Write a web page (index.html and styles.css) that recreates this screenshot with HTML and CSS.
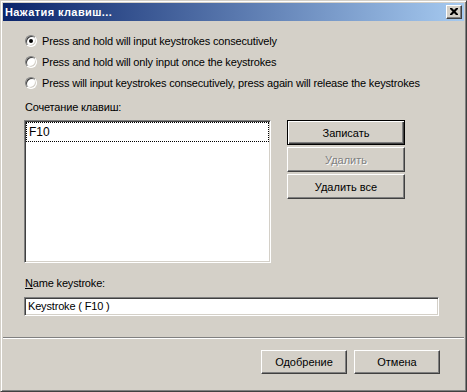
FILE: index.html
```html
<!DOCTYPE html>
<html lang="ru">
<head>
    <meta charset="UTF-8">
    <title>Нажатия клавиш...</title>
    <link rel="stylesheet" href="styles.css">
</head>
<body>
    <div class="window">
        <div class="titlebar">
            <span class="title">Нажатия клавиш...</span>
            <button class="close-btn">
                <svg width="8" height="7" viewBox="0 0 8 7">
                    <path d="M0 0h2l2 2 2-2h2v1l-2.5 2.5 2.5 2.5v1h-2l-2-2-2 2h-2v-1l2.5-2.5-2.5-2.5z" fill="#000"/>
                </svg>
            </button>
        </div>

        <div class="content">
            <div class="options">
                <label class="option"><span class="radio checked"></span>Press and hold will input keystrokes consecutively</label>
                <label class="option"><span class="radio"></span>Press and hold will only input once the keystrokes</label>
                <label class="option"><span class="radio"></span>Press will input keystrokes consecutively, press again will release the keystrokes</label>
            </div>

            <div class="caption">Сочетание клавиш:</div>
            <div class="keys-row">
                <div class="listbox">
                    <div class="list-item">F10</div>
                </div>
                <div class="side-buttons">
                    <button class="btn default">Записать</button>
                    <button class="btn disabled">Удалить</button>
                    <button class="btn">Удалить все</button>
                </div>
            </div>

            <div class="caption name-caption"><u>N</u>ame keystroke:</div>
            <div class="textbox">Keystroke ( F10 )</div>
        </div>

        <div class="separator"></div>

        <div class="footer">
            <button class="btn footer-btn">Одобрение</button>
            <button class="btn footer-btn">Отмена</button>
        </div>
    </div>
</body>
</html>
```

FILE: styles.css
```css
* {
    margin: 0;
    padding: 0;
    box-sizing: border-box;
}

body {
    background-color: #d4d0c8;
    font-family: "Liberation Sans", Arial, sans-serif;
    font-size: 11px;
    color: #000;
}

.window {
    width: 467px;
    height: 392px;
    background-color: #d4d0c8;
    border: 1px solid;
    border-color: #d4d0c8 #404040 #404040 #d4d0c8;
    box-shadow: inset 1px 1px #fff, inset -1px -1px #808080;
    padding: 2px;
    display: flex;
    flex-direction: column;
}

/* Title bar */
.titlebar {
    height: 18px;
    background: linear-gradient(to right, #0a246a, #a6caf0);
    display: flex;
    align-items: center;
    justify-content: space-between;
    padding: 0 2px 0 2px;
}

.title {
    color: #fff;
    font-weight: bold;
    font-size: 11px;
    letter-spacing: 0.4px;
}

.close-btn {
    width: 16px;
    height: 14px;
    background-color: #d4d0c8;
    border: 1px solid;
    border-color: #fff #404040 #404040 #fff;
    box-shadow: inset -1px -1px #808080;
    display: flex;
    align-items: center;
    justify-content: center;
    padding-bottom: 1px;
}

/* Main content */
.content {
    padding: 0 25px 0 21px;
}

.options {
    padding-top: 9px;
}

.option {
    display: flex;
    align-items: center;
    height: 21px;
    padding-left: 1px;
    white-space: nowrap;
    letter-spacing: -0.17px;
}

.radio {
    width: 12px;
    height: 12px;
    border-radius: 50%;
    background-color: #fff;
    border: 1px solid;
    border-color: #808080 #fff #fff #808080;
    box-shadow: inset 1px 1px #404040, inset -1px -1px #d4d0c8;
    margin-right: 5px;
    position: relative;
    flex-shrink: 0;
}

.radio.checked::after {
    content: "";
    position: absolute;
    left: 3px;
    top: 3px;
    width: 4px;
    height: 4px;
    border-radius: 50%;
    background-color: #000;
}

.caption {
    margin-top: 8px;
    line-height: 13px;
    height: 13px;
    padding-left: 1px;
    letter-spacing: -0.17px;
}

.keys-row {
    display: flex;
    margin-top: 6px;
}

.listbox {
    width: 247px;
    height: 143px;
    background-color: #fff;
    border: 1px solid;
    border-color: #808080 #fff #fff #808080;
    box-shadow: inset 1px 1px #404040, inset -1px -1px #d4d0c8;
    padding: 1px;
}

.list-item {
    height: 20px;
    line-height: 18px;
    padding-left: 2px;
    border: 1px dotted #000;
    font-size: 12px;
}

.side-buttons {
    display: flex;
    flex-direction: column;
    gap: 2px;
    margin-left: 16px;
}

.btn {
    width: 118px;
    height: 25px;
    font-family: "Liberation Sans", Arial, sans-serif;
    font-size: 11px;
    background-color: #d4d0c8;
    color: #000;
    border: 1px solid;
    border-color: #fff #404040 #404040 #fff;
    box-shadow: inset -1px -1px #808080;
}

.btn.default {
    border: 1px solid #000;
    box-shadow: inset 1px 1px #fff, inset -1px -1px #404040, inset -2px -2px #808080;
}

.btn.disabled {
    color: #808080;
    text-shadow: 1px 1px #fff;
}

.name-caption {
    margin-top: 14px;
}

.textbox {
    margin-top: 7px;
    height: 19px;
    line-height: 15px;
    background-color: #fff;
    border: 1px solid;
    border-color: #808080 #fff #fff #808080;
    box-shadow: inset 1px 1px #404040, inset -1px -1px #d4d0c8;
    padding: 1px 3px;
    letter-spacing: -0.17px;
}

.separator {
    margin-top: 21px;
    height: 2px;
    border-top: 1px solid #808080;
    border-bottom: 1px solid #fff;
}

/* Footer */
.footer {
    display: flex;
    justify-content: flex-end;
    gap: 7px;
    padding: 11px 24px 0 0;
}

.footer-btn {
    width: 86px;
    height: 24px;
}
```
